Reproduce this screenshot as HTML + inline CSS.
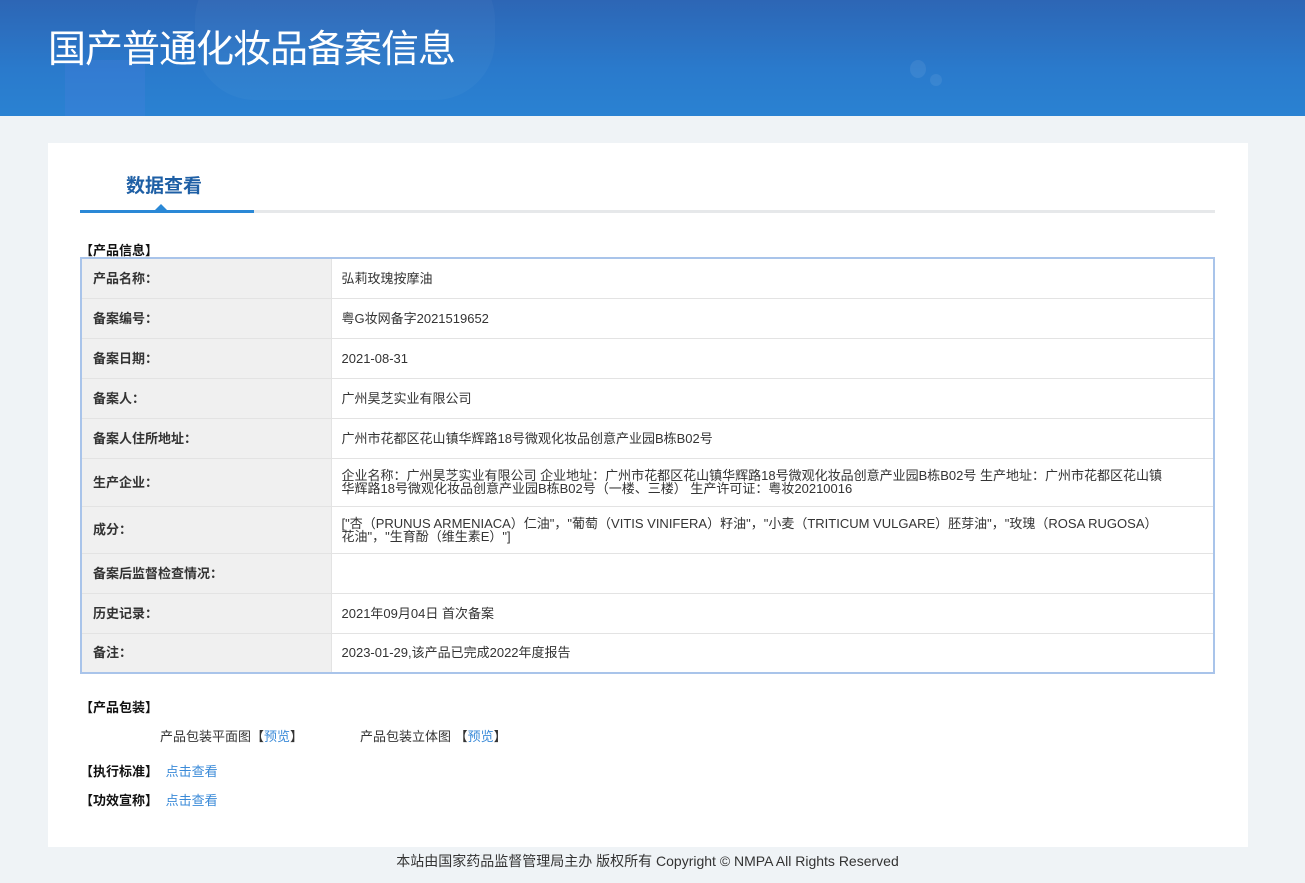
<!DOCTYPE html>
<html><head><meta charset="utf-8"><style>
*{margin:0;padding:0;box-sizing:border-box}
body{width:1305px;height:883px;background:#eff3f6;font-family:"Liberation Sans","Noto Sans CJK SC",sans-serif;font-size:13px;color:#333;position:relative;overflow:hidden}
.hd{position:absolute;left:0;top:0;width:1305px;height:116px;background:linear-gradient(180deg,#2d66b5 0%,#2a7acc 60%,#2a82d2 100%);overflow:hidden}
.hd h1{position:absolute;left:48px;top:18px;color:#fff;font-size:38px;font-weight:normal;letter-spacing:-1px;font-family:"Noto Sans CJK SC",sans-serif}
.card{position:absolute;left:48px;top:143px;width:1200px;height:704px;background:#fff}
.tab{position:absolute;left:78px;top:28px;font-size:19px;font-weight:bold;color:#1e5fa5}
.line{position:absolute;left:32px;top:67px;width:1135px;height:3px;background:#e6e8ea}
.line b{position:absolute;left:0;top:0;width:174px;height:3px;background:#2a88d6}
.tri{position:absolute;left:107px;top:61px;width:0;height:0;border-left:6px solid transparent;border-right:6px solid transparent;border-bottom:6px solid #2a88d6}
.sec{position:absolute;left:32px;font-weight:bold;color:#111;font-size:13px}
table{position:absolute;left:32px;top:114px;width:1135px;border-collapse:collapse;border:2px solid #a9c4ea}
td{border-bottom:1px solid #e3e3e3;height:40px;vertical-align:middle;line-height:13px}
td.l{width:250px;background:#f0f0f0;font-weight:bold;padding-left:11px;border-right:1px solid #e3e3e3}
td.v{padding-left:10px;padding-right:50px}
a{color:#3a8ad8;text-decoration:none}
.ft{position:absolute;top:851px;left:0;width:1295px;text-align:center;font-size:14px;color:#333}
</style></head><body>
<div class="hd">
<div style="position:absolute;left:65px;top:60px;width:80px;height:60px;background:rgba(90,130,230,.2)"></div>
<div style="position:absolute;left:195px;top:-40px;width:300px;height:140px;border-radius:60px;background:rgba(255,255,255,.03)"></div>
<div style="position:absolute;left:910px;top:60px;width:16px;height:18px;border-radius:50%;background:rgba(255,255,255,.07)"></div>
<div style="position:absolute;left:930px;top:74px;width:12px;height:12px;border-radius:50%;background:rgba(255,255,255,.07)"></div>
<h1>国产普通化妆品备案信息</h1></div>
<div class="card">
<div class="tab">数据查看</div>
<div class="line"><b></b></div><div class="tri"></div>
<div class="sec" style="top:97px">【产品信息】</div>
<table>
<tr><td class="l">产品名称：</td><td class="v">弘莉玫瑰按摩油</td></tr>
<tr><td class="l">备案编号：</td><td class="v">粤G妆网备字2021519652</td></tr>
<tr><td class="l">备案日期：</td><td class="v">2021-08-31</td></tr>
<tr><td class="l">备案人：</td><td class="v">广州昊芝实业有限公司</td></tr>
<tr><td class="l">备案人住所地址：</td><td class="v">广州市花都区花山镇华辉路18号微观化妆品创意产业园B栋B02号</td></tr>
<tr><td class="l" style="height:48px">生产企业：</td><td class="v">企业名称：广州昊芝实业有限公司 企业地址：广州市花都区花山镇华辉路18号微观化妆品创意产业园B栋B02号 生产地址：广州市花都区花山镇华辉路18号微观化妆品创意产业园B栋B02号（一楼、三楼） 生产许可证：粤妆20210016</td></tr>
<tr><td class="l" style="height:47px">成分：</td><td class="v">["杏（PRUNUS ARMENIACA）仁油"，"葡萄（VITIS VINIFERA）籽油"，"小麦（TRITICUM VULGARE）胚芽油"，"玫瑰（ROSA RUGOSA）花油"，"生育酚（维生素E）"]</td></tr>
<tr><td class="l">备案后监督检查情况：</td><td class="v"></td></tr>
<tr><td class="l">历史记录：</td><td class="v">2021年09月04日 首次备案</td></tr>
<tr><td class="l">备注：</td><td class="v">2023-01-29,该产品已完成2022年度报告</td></tr>
</table>
<div class="sec" style="top:554px">【产品包装】</div>
<div style="position:absolute;left:112px;top:583px">产品包装平面图【<a>预览</a>】</div>
<div style="position:absolute;left:312px;top:583px">产品包装立体图 【<a>预览</a>】</div>
<div class="sec" style="top:618px">【执行标准】 <a style="font-weight:normal;margin-left:4px">点击查看</a></div>
<div class="sec" style="top:647px">【功效宣称】 <a style="font-weight:normal;margin-left:4px">点击查看</a></div>
</div>
<div class="ft">本站由国家药品监督管理局主办 版权所有 Copyright © NMPA All Rights Reserved</div>
</body></html>
